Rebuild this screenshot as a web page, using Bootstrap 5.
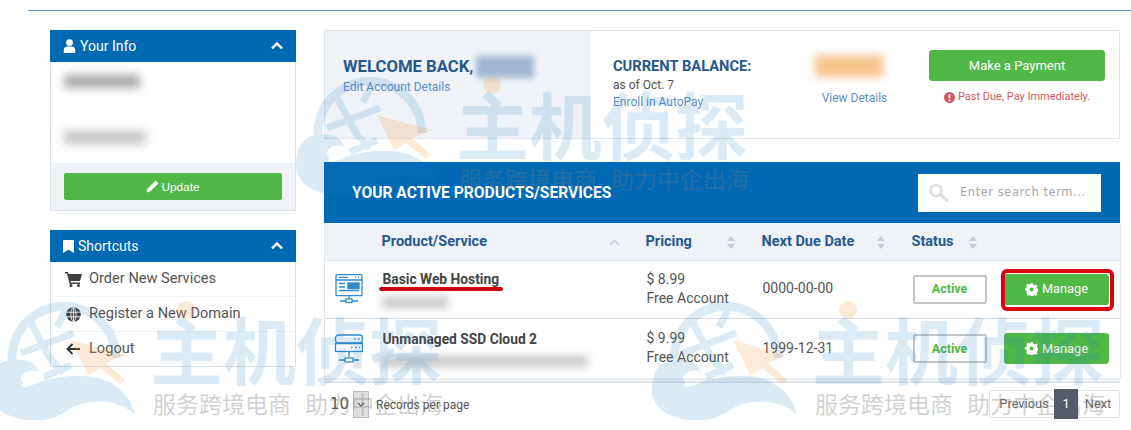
<!DOCTYPE html>
<html lang="en">
<head>
<meta charset="utf-8">
<title>Client Area</title>
<link rel="stylesheet" href="https://cdn.jsdelivr.net/npm/bootstrap@5.3.0/dist/css/bootstrap.min.css">
<style>
html,body{height:430px;overflow:hidden}
body{font-family:Roboto,"Liberation Sans",sans-serif;color:#444;background:#fff;position:relative;font-size:14px}
.topline{border-top:1px solid #5b9bc9;margin:10px 0 0 28px;height:20px}
.shell{width:1070px;margin-left:50px;gap:28px;align-items:flex-start}
.sidecol{width:246px;flex:none}
.maincol{width:796px;flex:none}
.sidepanel{border:1px solid #dbe3ea;border-top:0;margin-bottom:19px;background:#fff}
.sidehead{background:#0069b4;color:#fff;height:32px;padding:0 13px;font-size:14px;margin:0 -1px}
.sidehead svg{fill:#fff}
.infobody{height:101px;padding:8px 13px;position:relative}
.blurline{background:#8a8a8a;filter:blur(5px);height:13px}
.blur-a{width:76px;margin-top:5px;opacity:.75}
.blur-b{width:82px;margin-top:43px;opacity:.5}
.infofoot{background:#eff3f8;height:47px;padding:10px 13px}
.btn-leaf{--bs-btn-color:#fff;--bs-btn-bg:#4fb847;--bs-btn-border-color:#4fb847;--bs-btn-hover-color:#fff;--bs-btn-hover-bg:#45a73e;--bs-btn-hover-border-color:#45a73e}
.btn-update{font:11.8px "Liberation Sans",sans-serif;height:27px;padding:0;display:flex;align-items:center;justify-content:center;gap:2px;width:100%;border-radius:2px;color:#fff}
.shortrow{height:35px;padding:0 0 0 13px;gap:7px;font-size:14.6px;color:#555;border:0;border-bottom:1px solid #f2f4f6;border-radius:0;margin:0}
.shortrow:last-child{border-bottom:0;height:34px}
.shorticon{width:18px;flex:none;display:flex;justify-content:center}
.welcomebox{height:109px;border:1px solid #dfe5eb;margin-bottom:23px;display:flex;background:#fff}
.welcomeleft{width:265px;background:#eff3f8;padding:25px 18px;flex:none}
.welcometitle{font-size:16.7px;font-weight:700;color:#26588f;line-height:20px;display:flex;align-items:center;gap:3px;white-space:nowrap;margin:0 0 1px}
.blurname{display:inline-block;width:58px;height:22px;background:#9fb6d0;filter:blur(3px)}
.softlink{color:#5d8ec8;font-size:12px;text-decoration:none;line-height:16px;display:block}
.balancecol{width:200px;padding:25px 0 0 23px;flex:none}
.baltitle{font-size:14.7px;font-weight:700;color:#26588f;line-height:20px;white-space:nowrap}
.balsub{font-size:12px;line-height:18px;color:#555}
.amountcol{width:139px;text-align:center;padding-top:24px;flex:none}
.bluramt{width:68px;height:22px;background:#f8c48e;filter:blur(4px);margin:0 auto 13px 25px}
.amountcol .softlink{margin-right:10px}
.paycol{width:176px;flex:none;padding-top:19px;text-align:center}
.btn-pay{width:176px;height:31px;padding:0;font-size:13px;border-radius:3px}
.pastdue{font-size:11px;color:#cf5a5f;margin-top:8px;display:flex;align-items:center;justify-content:center;gap:3px;white-space:nowrap;line-height:16px}
.prodhead{background:#0069b4;height:61px;padding:0 19px 0 28px;color:#fff}
.prodtitle{font-size:15.6px;font-weight:700;margin:1px 0 0}
.searchwrap{width:183px;height:38px;background:#fff;display:flex;align-items:center;padding:0 10px;gap:10px;font-family:"DejaVu Sans",sans-serif;font-size:11.5px;color:#aaa;letter-spacing:.55px}
.searchwrap input{border:0;outline:0;width:130px;font:inherit;letter-spacing:inherit;color:#555;padding:0;background:transparent}
.searchwrap input::placeholder{color:#a8a8a8;opacity:1}
.prodtable{table-layout:fixed;margin:0;width:796px;--bs-table-bg:transparent;border-left:1px solid #e4e9ee;border-right:1px solid #e4e9ee}
.prodtable th{background:#eff3f8;color:#26588f;font-size:14.5px;font-weight:700;height:37px;padding:2px 0 0 8px;border-bottom:1px solid #e6ebf0;vertical-align:middle;white-space:nowrap}
.thinner{display:flex;align-items:center;justify-content:space-between;padding-right:18px}
.thinner.statuscell{width:66px;padding-right:0}
.prodtable td{padding:0;vertical-align:middle;border-bottom:1px solid #d8dee4;font-size:14px;color:#555;line-height:19.5px}
.row-one td{height:58px}.row-two td{height:60px;border-bottom:0}
.prodtable td.textcell{padding-left:9px}
.prodname{font-weight:700;font-size:13.8px;color:#444;margin-left:9px;line-height:20px;position:relative;top:-1px;display:inline-block}
.redmark{position:absolute;left:-4px;right:-4px;bottom:-2px;height:4px;background:#d00012;border-radius:2px}
.blurdom{height:11px;background:#999;filter:blur(4px);margin:6px 0 0 8px;opacity:.55}
.statusbadge{display:flex;align-items:center;justify-content:center;width:74px;height:29px;border:2px solid #c4c4c4;border-radius:2px;font-size:12.5px;font-weight:700;color:#4fb847;background:#fff;margin-left:9px}
.row-two .statusbadge{background:transparent}
.btn-manage{width:105px;height:31px;padding:0;font-size:12.8px;display:flex;align-items:center;justify-content:center;gap:4px;border-radius:3px;color:#fff;position:relative}
.redframe::after{content:"";position:absolute;inset:-6px -6px -7px -4px;border:4px solid #dd0010;border-radius:6px}
.cellend{display:flex;justify-content:flex-end;padding-right:11px}
.tableband{height:5px;background:#eef1f4;border-bottom:1px solid #d8dee4}
.tablefoot{height:45px;padding:7px 0 0 6px}
.rppgroup{margin-top:1px}
.rppnum{font-family:"DejaVu Sans",sans-serif;font-size:15px;color:#555;width:23px}
.rppspin{width:16px;height:27px;background:#dedede;border:1px solid #bbb;display:flex;align-items:center;justify-content:center}
.rpplabel{font-size:12px;color:#555;margin-left:7px}
.pagerbox{border:1px solid #e3e3e3;border-radius:3px;height:28px;width:131px;margin:0;--bs-pagination-padding-x:0;--bs-pagination-padding-y:0;--bs-pagination-border-width:0;--bs-pagination-bg:transparent;--bs-pagination-color:#666;--bs-pagination-font-size:12.8px;--bs-pagination-border-radius:0}
.pagerbox .page-link{height:26px;line-height:26px;color:#666;background:transparent}
.pagerbox .page-item:nth-child(1){width:65px;text-align:center;padding-left:3px}
.pagerbox .page-item:nth-child(2){width:23px;text-align:center}
.pagerbox .page-item:nth-child(3){width:41px;text-align:center}
.pagerbox .page-item.active .page-link{background:#555b68;color:#fff;height:30px;margin-top:-2px;line-height:30px}
.watermark{position:absolute;left:0;top:0;width:1131px;height:430px;pointer-events:none}
.wm-big{font-family:"Noto Sans CJK SC",sans-serif;font-size:73px;font-weight:700}
.wm-small{font-family:"Noto Sans CJK SC",sans-serif;font-size:23px;fill:#777;fill-opacity:.34}
</style>
</head>
<body>
<div class="topline"></div>
<div class="d-flex shell">
  <aside class="sidecol">
    <div class="sidepanel">
      <div class="sidehead d-flex align-items-center justify-content-between">
        <span class="d-flex align-items-center gap-1">
          <svg width="13" height="14" viewBox="0 0 13 14"><circle cx="6.5" cy="3.6" r="3.4"/><path d="M.8 14V11c0-2.2 1.6-3.6 3.4-3.6h4.600c1.800 0 3.400 1.400 3.400 3.600v3z"/></svg>
          Your Info</span>
        <svg width="12" height="8" viewBox="0 0 12 8"><path d="M1 6.5 6 1.5l5 5" fill="none" stroke="#fff" stroke-width="2.4"/></svg>
      </div>
      <div class="infobody"><div class="blurline blur-a"></div><div class="blurline blur-b"></div></div>
      <div class="infofoot">
        <button type="button" class="btn btn-leaf btn-update">
          <svg width="13" height="13" viewBox="0 0 13 13"><path d="M9.6.6 12.4 3.4 4.2 11.6.6 12.4 1.4 8.8z" fill="#fff"/></svg>Update</button>
      </div>
    </div>
    <div class="sidepanel">
      <div class="sidehead d-flex align-items-center justify-content-between">
        <span class="d-flex align-items-center gap-1">
          <svg width="11" height="13" viewBox="0 0 11 13"><path d="M1 0h9a1 1 0 0 1 1 1v12L5.500 9.800 0 13V1a1 1 0 0 1 1-1z"/></svg>
          Shortcuts</span>
        <svg width="12" height="8" viewBox="0 0 12 8"><path d="M1 6.500 6 1.500l5 5" fill="none" stroke="#fff" stroke-width="2.400"/></svg>
      </div>
      <div class="list-group list-group-flush">
        <a href="#" class="list-group-item list-group-item-action d-flex align-items-center shortrow">
          <span class="shorticon"><svg width="17" height="15" viewBox="0 0 17 15"><path d="M0 0h3l.6 2H17l-2 7H5.400l.4 1.500H15V12H4.600L2 1.500H0z" fill="#3f3f3f"/><circle cx="6" cy="13.500" r="1.500" fill="#3f3f3f"/><circle cx="13.500" cy="13.500" r="1.500" fill="#3f3f3f"/></svg></span>Order New Services</a>
        <a href="#" class="list-group-item list-group-item-action d-flex align-items-center shortrow">
          <span class="shorticon"><svg width="15" height="15" viewBox="0 0 15 15"><circle cx="7.500" cy="7.500" r="7.300" fill="#3f3f3f"/><path d="M0 5.200h15M0 9.800h15M7.500 0v15M7.500 0C4 3 4 12 7.500 15M7.500 0C11 3 11 12 7.500 15" fill="none" stroke="#fff" stroke-width=".9"/></svg></span>Register a New Domain</a>
        <a href="#" class="list-group-item list-group-item-action d-flex align-items-center shortrow">
          <span class="shorticon"><svg width="14" height="12" viewBox="0 0 14 12"><path d="M14 6H2M6.500 1 1.500 6l5 5" fill="none" stroke="#333" stroke-width="1.900"/></svg></span>Logout</a>
      </div>
    </div>
  </aside>
  <main class="maincol">
    <section class="welcomebox">
      <div class="welcomeleft">
        <h2 class="welcometitle">WELCOME BACK,<span class="blurname"></span></h2>
        <a href="#" class="softlink">Edit Account Details</a>
      </div>
      <div class="balancecol">
        <div class="baltitle">CURRENT BALANCE:</div>
        <div class="balsub">as of Oct. 7</div>
        <a href="#" class="softlink">Enroll in AutoPay</a>
      </div>
      <div class="amountcol">
        <div class="bluramt"></div>
        <a href="#" class="softlink">View Details</a>
      </div>
      <div class="paycol">
        <button type="button" class="btn btn-leaf btn-pay">Make a Payment</button>
        <div class="pastdue"><svg width="11" height="11" viewBox="0 0 11 11"><circle cx="5.500" cy="5.500" r="5.500" fill="#cf5a5f"/><path d="M5.500 2.300v3.700" stroke="#fff" stroke-width="1.700"/><circle cx="5.500" cy="8.200" r="1" fill="#fff"/></svg>Past Due, Pay Immediately.</div>
      </div>
    </section>
    <section>
      <div class="prodhead d-flex align-items-center justify-content-between">
        <h3 class="prodtitle">YOUR ACTIVE PRODUCTS/SERVICES</h3>
        <div class="searchwrap">
          <svg width="22" height="20" viewBox="0 0 22 20" class="flex-shrink-0"><circle cx="8" cy="7.500" r="5.500" fill="none" stroke="#ddd" stroke-width="2.400"/><path d="M12.500 11.500 20 18" stroke="#ddd" stroke-width="3"/></svg>
          <input type="text" placeholder="Enter search term...">
        </div>
      </div>
      <table class="table prodtable">
        <colgroup><col style="width:49px"><col style="width:264px"><col style="width:116px"><col style="width:150px"><col style="width:92px"><col style="width:125px"></colgroup>
        <thead><tr>
          <th></th>
          <th><div class="thinner">Product/Service<svg width="11" height="7" viewBox="0 0 11 7"><path d="M1 6l4.500-4.500L10 6" fill="none" stroke="#c4ccd6" stroke-width="1.500"/></svg></div></th>
          <th><div class="thinner">Pricing<svg width="10" height="13" viewBox="0 0 10 13"><path d="M5 0l4 5H1zM5 13 1 8h8z" fill="#c4ccd6"/></svg></div></th>
          <th><div class="thinner">Next Due Date<svg width="10" height="13" viewBox="0 0 10 13"><path d="M5 0l4 5H1zM5 13 1 8h8z" fill="#c4ccd6"/></svg></div></th>
          <th><div class="thinner statuscell">Status<svg width="10" height="13" viewBox="0 0 10 13"><path d="M5 0l4 5H1zM5 13 1 8h8z" fill="#c4ccd6"/></svg></div></th>
          <th></th>
        </tr></thead>
        <tbody>
          <tr class="row-one">
            <td class="text-center"><svg width="28" height="30" viewBox="0 0 28 30" fill="none" stroke="#2f8ad0" stroke-width="1.300"><rect x="1" y=".7" width="26" height="21" rx="1"/><path d="M1 6h26M4 3.400h9M20 3.400h1M23 3.400h1M4 9.500h6M4 13h6M4 16.500h20"/><rect x="13" y="9" width="11" height="5.500" fill="#2f8ad0"/><path d="M14 22v3M5 27h18"/><rect x="11" y="25" width="6" height="3.500" fill="#fff"/></svg></td>
            <td><span class="prodname">Basic Web Hosting<span class="redmark"></span></span><div class="blurdom" style="width:66px"></div></td>
            <td class="textcell">$ 8.99<br>Free Account</td>
            <td class="textcell">0000-00-00</td>
            <td><span class="statusbadge">Active</span></td>
            <td><div class="cellend"><a href="#" class="btn btn-leaf btn-manage redframe"><svg width="13" height="13" viewBox="0 0 13 13"><path d="M5.200 0h2.600l.3 1.800 1.300.6 1.500-1 1.800 1.800-1 1.500.6 1.300 1.700.3v2.600l-1.700.3-.6 1.300 1 1.500-1.800 1.800-1.500-1-1.300.6-.3 1.700H5.200l-.3-1.700-1.300-.6-1.500 1L.3 10.800l1-1.500-.6-1.300L-1 7.700V5.100L.7 4.800l.6-1.300-1-1.500L2.100.2l1.500 1 1.300-.6z" transform="translate(.9 .3) scale(.92)" fill="#fff"/><circle cx="6.500" cy="6.500" r="2" fill="#4fb847"/></svg>Manage</a></div></td>
          </tr>
          <tr class="row-two">
            <td class="text-center"><svg width="30" height="29" viewBox="0 0 30 29" fill="none" stroke="#2f8ad0" stroke-width="1.300"><rect x="1.500" y="1" width="27" height="8" rx="3"/><rect x="1.500" y="9.500" width="27" height="8"/><path d="M20 5h1.500M24 5h1.500M17 13.500h1.500M21 13.500h1.500M25 13.500h1M15 18v7M5 26h20"/><rect x="11" y="24" width="8" height="4" fill="#fff"/></svg></td>
            <td><span class="prodname">Unmanaged SSD Cloud 2</span><div class="blurdom" style="width:206px"></div></td>
            <td class="textcell">$ 9.99<br>Free Account</td>
            <td class="textcell">1999-12-31</td>
            <td><span class="statusbadge">Active</span></td>
            <td><div class="cellend"><a href="#" class="btn btn-leaf btn-manage"><svg width="13" height="13" viewBox="0 0 13 13"><path d="M5.200 0h2.600l.3 1.800 1.300.6 1.500-1 1.800 1.800-1 1.500.6 1.300 1.700.3v2.600l-1.700.3-.6 1.300 1 1.500-1.800 1.800-1.500-1-1.300.6-.3 1.700H5.200l-.3-1.700-1.300-.6-1.500 1L.3 10.800l1-1.500-.6-1.300L-1 7.700V5.100L.7 4.800l.6-1.300-1-1.500L2.100.2l1.500 1 1.300-.6z" transform="translate(.9 .3) scale(.92)" fill="#fff"/><circle cx="6.500" cy="6.500" r="2" fill="#4fb847"/></svg>Manage</a></div></td>
          </tr>
        </tbody>
      </table>
      <div class="tableband"></div>
      <div class="tablefoot d-flex justify-content-between align-items-start">
        <div class="d-flex align-items-center rppgroup">
          <span class="rppnum">10</span>
          <span class="rppspin"><svg width="8" height="5" viewBox="0 0 8 5"><path d="M.8.8 4 4 7.200.8" fill="none" stroke="#555" stroke-width="1.200"/></svg></span>
          <span class="rpplabel">Records per page</span>
        </div>
        <ul class="pagination pagerbox">
          <li class="page-item"><a class="page-link" href="#">Previous</a></li>
          <li class="page-item active"><a class="page-link" href="#">1</a></li>
          <li class="page-item"><a class="page-link" href="#">Next</a></li>
        </ul>
      </div>
    </section>
  </main>
</div>
<svg class="watermark" viewBox="0 0 1131 430" aria-hidden="true">
  <defs>
    <g id="wmark">
      <g opacity=".15" fill="#1f7ac2">
        <path d="M116 358A52 52 0 1 0 20 386" fill="none" stroke="#1f7ac2" stroke-width="9"/>
        <path d="M31 323 51 360 64 373M66 310 57 327M21 353 74 333M44 377 71 365" fill="none" stroke="#1f7ac2" stroke-width="7"/>
        <path d="M-10 390C-10 370 0 360 11 360C25 358 37 362 38 372C30 368 22 372 20 380C19 386 24 388 30 386C50 376 85 372 105 380C122 388 132 400 135 415C122 402 100 398 78 405C65 410 58 420 40 420C15 422-10 412-10 390Z"/>
        <text class="wm-big" x="150" y="379">主机侦探</text>
      </g>
      <g opacity=".2" fill="#ef9a3c">
        <path d="M71 340 126 355 106 363 125 380 120 384 100 368 88 375Z"/>
        <circle cx="186" cy="310" r="9"/>
      </g>
      <text class="wm-small" x="153" y="413">服务跨境电商</text>
      <text class="wm-small" x="305" y="413">助力中企出海</text>
    </g>
  </defs>
  <use href="#wmark" x="306" y="-225"/>
  <use href="#wmark"/>
  <use href="#wmark" x="662"/>
</svg>
</body>
</html>
